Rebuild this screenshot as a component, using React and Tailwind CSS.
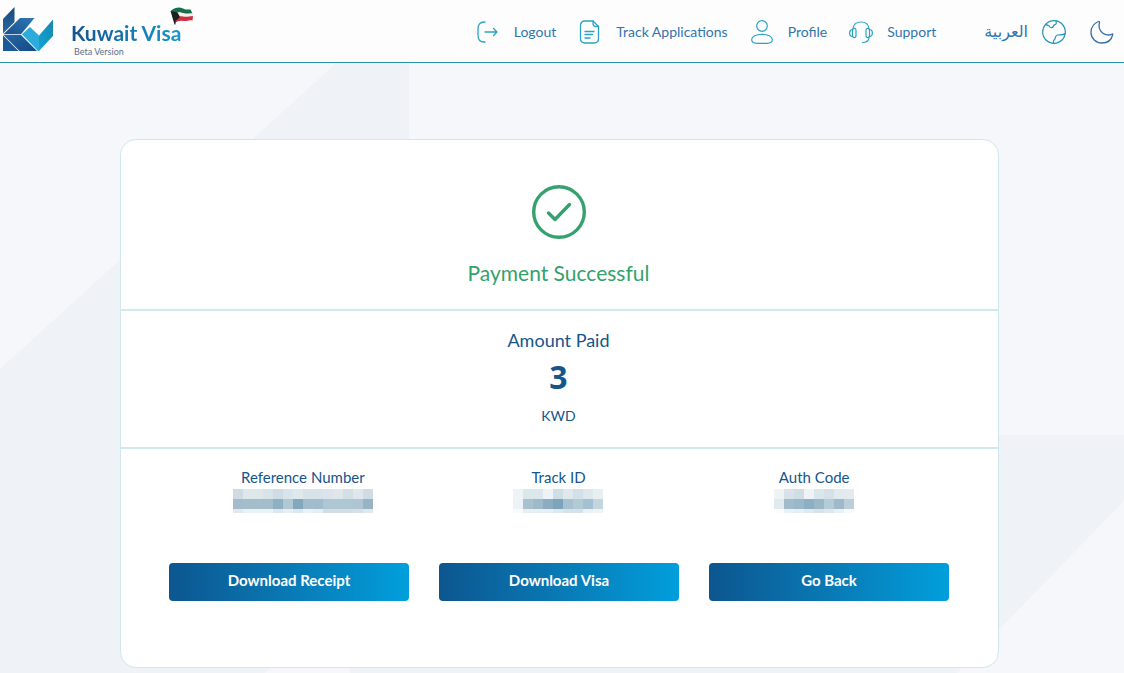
const stroke = {
  fill: "none",
  stroke: "currentColor",
  strokeLinecap: "round",
  strokeLinejoin: "round",
};

function Logo() {
  return (
    <svg className="h-11 w-[50px] shrink-0" viewBox="0 0 50 44" aria-hidden="true">
      <defs>
        <linearGradient id="lg-blade" x1="0" y1="0" x2="0" y2="1">
          <stop offset="0" stopColor="#174a80" />
          <stop offset="1" stopColor="#2a6aa3" />
        </linearGradient>
        <linearGradient id="lg-arm" x1="0" y1="1" x2="1" y2="0">
          <stop offset="0" stopColor="#17508d" />
          <stop offset="1" stopColor="#2f78b3" />
        </linearGradient>
        <linearGradient id="lg-leg" x1="0" y1="0" x2="1" y2="1">
          <stop offset="0" stopColor="#2468a4" />
          <stop offset="1" stopColor="#144a88" />
        </linearGradient>
        <linearGradient id="lg-tick" x1="0" y1="1" x2="1" y2="0">
          <stop offset="0" stopColor="#12a5d8" />
          <stop offset="1" stopColor="#1687ac" />
        </linearGradient>
      </defs>
      <path d="M0 12 11.500 0V15L0 26.500Z" fill="url(#lg-blade)" />
      <path d="M0.500 27.300 17 11H31.500L18 27.300Z" fill="url(#lg-arm)" />
      <path d="M0.500 28H18L34 44H16.500Z" fill="url(#lg-leg)" />
      <path d="M0 28.500 15.500 44H0Z" fill="#1b5a96" />
      <path d="M19 27.300 27 20 36 28.500V44H35Z" fill="#2cabdc" />
      <path d="M36 28.500 50 12.500V29L36 44Z" fill="url(#lg-tick)" />
    </svg>
  );
}

function Flag() {
  return (
    <svg className="absolute -top-3.5 left-[99px] h-[18px] w-6" viewBox="0 0 24 18" aria-hidden="true">
      <path d="M1 3.500C5 .5 9-.5 13 1.500C16 3 18 2.500 20.500 2.500L22.500 6.500C19 6 16 7.500 12.500 6C9 4.500 6 6 3.500 8Z" fill="#16704a" />
      <path d="M3 8C6 5.500 9 4.500 12.500 6C16 7.500 19 6 22.500 6.500L23 9.500C19 9.500 17 11 13 10C10 9 7 10 4.500 12Z" fill="#f2efef" />
      <path d="M4.500 12C7 10 10 8.500 13 9.500C17 10.500 19 9 23 9L22.500 13.500C19 12.500 17 14.500 13.500 14C10 13.500 7.500 14 5 16Z" fill="#cc2f3d" />
      <path d="M.5 4 7.500 5.500 10 10 5.500 14 5.500 17.500 4.500 17.500Z" fill="#1b1f20" />
    </svg>
  );
}

function LogoutIcon() {
  return (
    <svg className="size-6" viewBox="0 0 24 24" strokeWidth="1.3" {...stroke}>
      <path d="M9 2H8C4 2 2 5 2 9V15C2 19 4 22 8 22H9M9 12H21M17.500 8.500 21 12 17.500 15.500" />
    </svg>
  );
}

function DocIcon() {
  return (
    <svg className="size-6" viewBox="0 0 24 24" strokeWidth="1.3" {...stroke}>
      <path d="M15 1H7C4 1 2.500 2.500 2.500 5.500V18.500C2.500 21.500 4 23 7 23H16C19 23 20.500 21.500 20.500 18.500V6.500Z" />
      <path d="M15 1V3.500C15 5.500 16 6.500 18 6.500H20.500M7 11.500H16M7 14.500H14.500M7 18H12" />
    </svg>
  );
}

function ProfileIcon() {
  return (
    <svg className="size-6" viewBox="0 0 24 24" strokeWidth="1.2" {...stroke}>
      <circle cx="12" cy="6" r="5.300" />
      <path d="M1.700 19.500C1.700 16.500 6 14.300 12 14.300S22.300 16.500 22.300 19.500C22.300 22 20.500 23.300 17 23.300H7C3.500 23.300 1.700 22 1.700 19.500Z" />
    </svg>
  );
}

function SupportIcon() {
  return (
    <svg className="size-6" viewBox="0 0 24 24" strokeWidth="1.2" {...stroke}>
      <path d="M4 8.500C4.500 4.500 7.500 2 12 2S19.500 4.500 20 8.500M20 17.500C19.800 21 17.500 22.500 13.500 22.500" />
      <path d="M7 10.500C7 7.500 3.500 8 3.500 10.500V15.500C3.500 18 7 18.500 7 15.500ZM3.500 9.500C-.3 9.500-.3 16.500 3.500 16.500M17 10.500C17 7.500 20.500 8 20.500 10.500V15.500C20.500 18 17 18.500 17 15.500ZM20.500 9.500C24.300 9.500 24.300 16.500 20.500 16.500" />
    </svg>
  );
}

function GlobeIcon() {
  return (
    <svg className="size-6" viewBox="0 0 24 24" strokeWidth="1.2" {...stroke}>
      <circle cx="12" cy="12" r="11.300" />
      <path d="M4.300 4C4.800 6 6.500 4.800 7.500 6.500C8.500 8.200 11 8 11.500 6C11.800 4.200 14.500 5 14.300 2.800L14 1M23.200 13.500C21.500 15.500 18 14.500 15.500 15C12.500 15.500 14 18.500 12.500 19.500C11 20.500 11.500 22 11.500 23" />
    </svg>
  );
}

function MoonIcon() {
  return (
    <svg className="size-6" viewBox="0 0 24 24" strokeWidth="1.3" {...stroke}>
      <path d="M8.500 1.500C4 3.300 1 7.300 1 12.500C1 18.500 6 23 12 23C17.500 23 21.500 20 22.800 14.500C22.900 13.700 22 13.700 21.500 14.200C19.500 15.500 15 15.300 12 12.500C9 9.500 8.500 6 9.500 2.500C9.700 1.700 9.200 1.200 8.500 1.500Z" />
    </svg>
  );
}

const links = [
  { label: "Logout", href: "#logout", icon: LogoutIcon },
  { label: "Track Applications", href: "#track", icon: DocIcon },
  { label: "Profile", href: "#profile", icon: ProfileIcon },
  { label: "Support", href: "#support", icon: SupportIcon },
];

function Header() {
  return (
    <header className="relative flex h-[63px] items-center border-b border-[#2a92a8] bg-[#fdfdfe]">
      <a href="#home" className="flex items-start gap-[18px] pt-1 pl-[3px]">
        <Logo />
        <div className="relative mt-3.5">
          <div className="bg-linear-to-r from-[#15548f] to-[#1597cb] bg-clip-text text-[21px] leading-6 font-bold text-transparent">
            Kuwait Visa
          </div>
          <div className="pl-[3px] text-[9px] leading-[14px] text-[#5d6f8c]">Beta Version</div>
          <Flag />
        </div>
      </a>
      <nav className="ml-auto flex items-center pt-0.5 pr-[10px] text-sm text-[#3274ad]">
        <div className="mr-12 flex items-center gap-[22px]">
          {links.map(({ label, href, icon: Icon }) => (
            <a key={label} href={href} className="flex items-center gap-[14px]">
              <span className="text-[#2ba3c0]"><Icon /></span>
              {label}
            </a>
          ))}
        </div>
        <button type="button" className="mr-6 flex items-center gap-[14px]">
          <span lang="ar" className="font-['DejaVu_Sans',sans-serif] text-base leading-6">العربية</span>
          <span className="text-[#2595b8]"><GlobeIcon /></span>
        </button>
        <button type="button" aria-label="Dark mode" className="text-[#3b71a5]"><MoonIcon /></button>
      </nav>
    </header>
  );
}

const details = [
  {
    label: "Reference Number",
    rows: [
      ["#cfdbe4", "#dfe7eb", "#dfe7eb", "#d8e3ea", "#cfdce4", "#d8e3ea", "#dfe8ec", "#d8e2e9", "#d8e2e9", "#dbe4ea", "#dfe7eb", "#d3dfe6", "#dfe7eb", "#d0dce4"],
      ["#a3bbca", "#a3bdcb", "#a3bdcb", "#a3bdcb", "#8fb0c4", "#b0c8d4", "#85a7be", "#a0bccd", "#a0bccd", "#afc7d5", "#afc6d3", "#afc6d3", "#aec6d4", "#97b3c4"],
      ["#e0ebef", "#eaf2f5", "#eaf2f5", "#eaf2f5", "#dce8ee", "#e5eff3", "#dce8ee", "#eaf2f5", "#e5eff3", "#d2dde4", "#d2dde4", "#d2dde4", "#d5e0e7", "#dfe8ed"],
    ],
  },
  {
    label: "Track ID",
    rows: [
      ["#eef4f6", "#dce7ec", "#dce7ec", "#eef4f6", "#cfdee6", "#dfe8ec", "#d3e0e8", "#dde7ec", "#e8eff1"],
      ["#ebf3f6", "#a9c0ce", "#9db9ca", "#8dabc1", "#7ea3bb", "#a5c1d2", "#b2c9d6", "#a5c0d0", "#c3d6de"],
      ["#f8fbfc", "#e6eff3", "#e6eff3", "#e6eff3", "#dce9ef", "#d5e2ea", "#d5e2ea", "#e9f1f4", "#eef4f6"],
    ],
  },
  {
    label: "Auth Code",
    rows: [
      ["#eef3f5", "#d8e2e8", "#d1dde5", "#eef4f6", "#dbe6ec", "#d5e1e8", "#e2eaee", "#e3ebef"],
      ["#e0e9ed", "#a0bccb", "#9bb8ca", "#8dafc5", "#9bb8c9", "#b4cbd8", "#9ebaca", "#bccfd9"],
      ["#fbfdfd", "#e8f1f4", "#e6eff3", "#dfeaf0", "#d6e3ea", "#dde8ee", "#e9f1f4", "#f5f9fa"],
    ],
  },
];

function Redacted({ rows }) {
  return (
    <div className="mt-0.5 flex flex-col items-center" role="img" aria-label="Hidden value">
      {rows.map((row, i) => (
        <div key={i} className={i === 2 ? "flex h-1" : "flex h-[10px]"}>
          {row.map((color, j) => (
            <span key={j} className="w-[10px]" style={{ backgroundColor: color }} />
          ))}
        </div>
      ))}
    </div>
  );
}

function Backdrop() {
  return (
    <svg className="absolute inset-0 h-full w-full" viewBox="0 0 1124 610" preserveAspectRatio="none" aria-hidden="true">
      <path d="M0 306 336 0H409V480L265 610H0Z" fill="#eff3f8" />
      <path d="M1124 372V438L957 610H350V550L890 372Z" fill="#eff3f8" />
    </svg>
  );
}

export default function App() {
  return (
    <div className="flex min-h-screen flex-col bg-[#f5f7fb] font-[Lato,'Noto_Sans',sans-serif]">
      <Header />
      <main className="relative grow pt-[76px] pr-[125px] pb-[5px] pl-[120px]">
        <Backdrop />
        <section className="relative rounded-2xl border border-[#cfe8f0] bg-white text-center text-[#15558c]">
          <div className="flex h-[171px] flex-col items-center border-b-2 border-[#cfe9ef] pt-[45px] pr-0.5 text-[#35a16c]">
            <svg className="size-[54px]" viewBox="0 0 54 54" {...stroke} aria-hidden="true">
              <circle cx="27" cy="27" r="25.300" strokeWidth="3.400" />
              <path d="M16.500 28 23 34.500 37.500 19.500" strokeWidth="3.400" />
            </svg>
            <h1 className="mt-[18px] text-[21px] leading-8">Payment Successful</h1>
          </div>
          <div className="flex h-[138px] flex-col items-center border-b-2 border-[#cfe9ef] pt-[17px] pr-0.5">
            <h2 className="text-lg leading-6">Amount Paid</h2>
            <p className="mt-[5px] font-['Noto_Sans',sans-serif] text-[32px] leading-10 font-bold">3</p>
            <p className="mt-[7px] text-sm leading-6">KWD</p>
          </div>
          <dl className="grid grid-cols-3 pt-[18px] pr-14 pl-[54px]">
            {details.map(({ label, rows }) => (
              <div key={label}>
                <dt className="text-[15px] leading-5">{label}</dt>
                <dd><Redacted rows={rows} /></dd>
              </div>
            ))}
          </dl>
          <div className="grid grid-cols-3 gap-[30px] pt-[50px] pr-[49px] pb-[66px] pl-12">
            {["Download Receipt", "Download Visa", "Go Back"].map((label) => (
              <button
                key={label}
                type="button"
                className="h-[38px] rounded bg-linear-to-r from-[#0c568f] to-[#009fdc] pb-1 text-[15px] font-bold text-white"
              >
                {label}
              </button>
            ))}
          </div>
        </section>
      </main>
    </div>
  );
}
